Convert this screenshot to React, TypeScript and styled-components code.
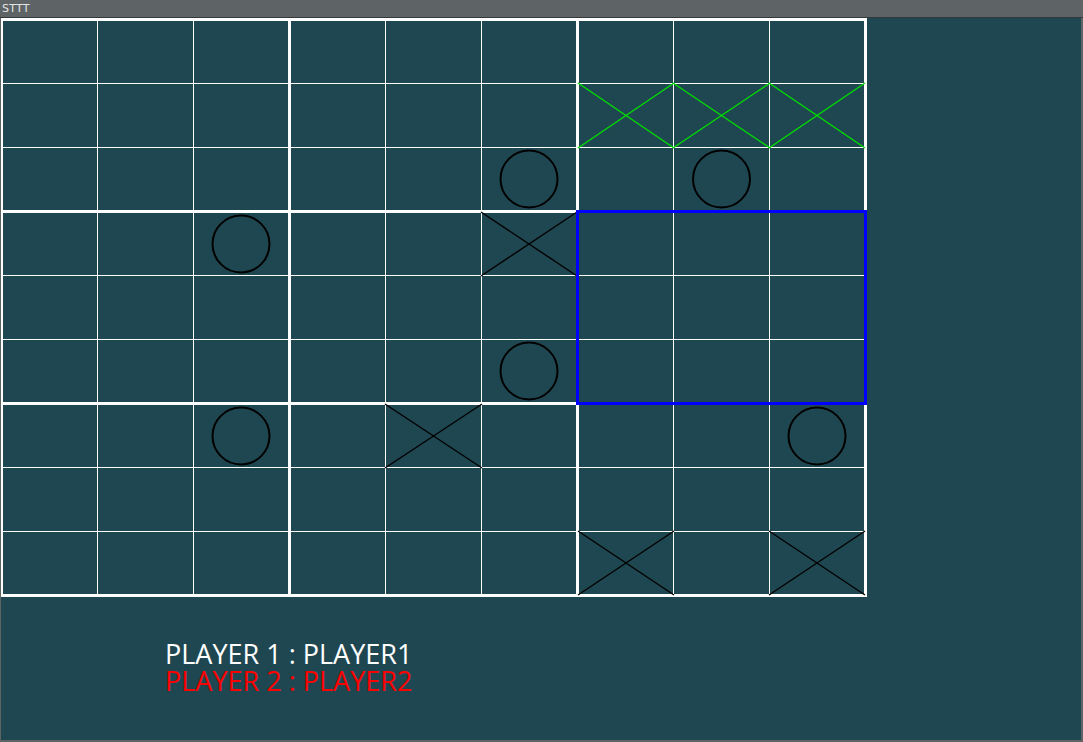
import React from "react";
import styled, { createGlobalStyle } from "styled-components";

const GlobalStyle = createGlobalStyle`
  html, body { margin: 0; padding: 0; background: #5e6466; }
  body { overflow: hidden; }
`;

const TEAL = "#1f4751";

const Window = styled.div`
  width: 1083px;
  height: 742px;
  display: flex;
  flex-direction: column;
  background: #5e6466;
`;

const TitleBar = styled.div`
  height: 17px;
  display: flex;
  align-items: center;
  padding-left: 2px;
  font-family: "DejaVu Sans", sans-serif;
  font-size: 11px;
  color: #e4e4e4;
  letter-spacing: 0.2px;
`;

const Divider = styled.div`
  height: 1px;
  background: #33383a;
`;

const Content = styled.div`
  flex: 1;
  margin: 0 2px 2px 1px;
  background: ${TEAL};
  display: flex;
  flex-direction: column;
  align-items: flex-start;
`;

const Board = styled.div`
  display: grid;
  grid-template-columns: repeat(3, 285px);
  grid-template-rows: repeat(3, 189px);
  gap: 3px;
  padding: 3px 3px 3px 2px;
  background: #ffffff;
`;

const SubBoard = styled.div`
  position: relative;
  display: grid;
  grid-template-columns: 94px 95px 94px;
  grid-template-rows: 62px 63px 62px;
  gap: 1px;
  background: #ffffff;
`;

const Highlight = styled.div`
  position: absolute;
  inset: -3px;
  border: 3px solid #0000ff;
  pointer-events: none;
  z-index: 2;
`;

const Cell = styled.div`
  position: relative;
  background: ${TEAL};
`;

const MarkSvg = styled.svg`
  position: absolute;
  left: -1px;
  top: -1px;
  width: calc(100% + 2px);
  height: calc(100% + 2px);
  overflow: visible;
  z-index: 1;
`;

const Players = styled.div`
  margin-top: 43px;
  padding-left: 164px;
  font-family: "Open Sans", sans-serif;
  font-size: 27px;
  font-weight: 400;
  line-height: 27px;
`;

const PlayerLine = styled.div<{ $color: string }>`
  color: ${(p) => p.$color};
  white-space: nowrap;
`;

type Mark = "X" | "O" | "G";

const marks: Record<string, Mark> = {
  "1,6": "G",
  "1,7": "G",
  "1,8": "G",
  "2,5": "O",
  "2,7": "O",
  "3,2": "O",
  "3,5": "X",
  "5,5": "O",
  "6,2": "O",
  "6,4": "X",
  "6,8": "O",
  "8,6": "X",
  "8,8": "X",
};

function MarkDrawing({ mark }: { mark: Mark }) {
  if (mark === "O") {
    return (
      <MarkSvg viewBox="0 0 96 64">
        <circle cx="48" cy="32" r="28.5" fill="none" stroke="#000" strokeWidth="2" />
      </MarkSvg>
    );
  }
  const color = mark === "G" ? "#00dd00" : "#000";
  return (
    <MarkSvg viewBox="0 0 96 64" preserveAspectRatio="none">
      <line x1="0" y1="0" x2="96" y2="64" stroke={color} strokeWidth="1.4" vectorEffect="non-scaling-stroke" />
      <line x1="96" y1="0" x2="0" y2="64" stroke={color} strokeWidth="1.4" vectorEffect="non-scaling-stroke" />
    </MarkSvg>
  );
}

export default function App() {
  const subs = [];
  for (let br = 0; br < 3; br++) {
    for (let bc = 0; bc < 3; bc++) {
      const cells = [];
      for (let r = 0; r < 3; r++) {
        for (let c = 0; c < 3; c++) {
          const key = `${br * 3 + r},${bc * 3 + c}`;
          const m = marks[key];
          cells.push(<Cell key={key}>{m && <MarkDrawing mark={m} />}</Cell>);
        }
      }
      subs.push(
        <SubBoard key={`${br}-${bc}`}>
          {cells}
          {br === 1 && bc === 2 && <Highlight />}
        </SubBoard>
      );
    }
  }
  return (
    <>
      <GlobalStyle />
      <Window>
        <TitleBar>STTT</TitleBar>
        <Divider />
        <Content>
          <Board>{subs}</Board>
          <Players>
            <PlayerLine $color="#ffffff">PLAYER 1 : PLAYER1</PlayerLine>
            <PlayerLine $color="#ff0000">PLAYER 2 : PLAYER2</PlayerLine>
          </Players>
        </Content>
      </Window>
    </>
  );
}
